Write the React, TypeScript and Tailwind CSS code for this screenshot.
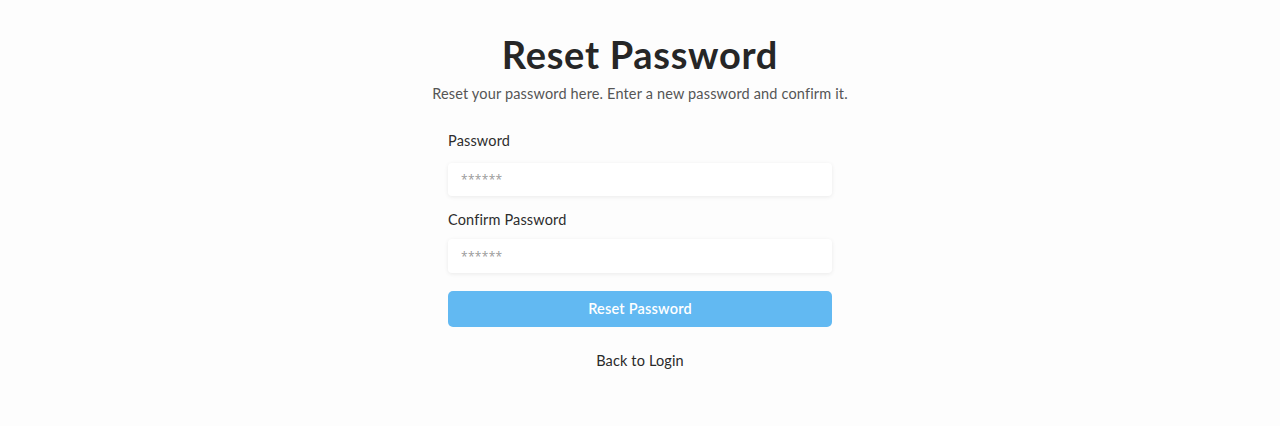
export default function App() {
  return (
    <div className="min-h-[426px] w-full bg-[#fdfdfd] font-['Lato','Noto_Sans',sans-serif] text-[#2a2a2a]">
      <div className="flex flex-col items-center pt-[32px]">
        <h1 className="text-[38px] font-bold leading-[44px] tracking-[0.7px] text-[#262626]">Reset Password</h1>
        <p className="mt-[8px] text-[14.5px] leading-[20px] tracking-[0.16px] text-[#555]">
          Reset your password here. Enter a new password and confirm it.
        </p>
        <form className="mt-[27px] flex w-[384px] flex-col" onSubmit={(e) => e.preventDefault()}>
          <label className="text-[14.5px] leading-[20px] tracking-[0.15px] text-[#2d2d2d]">Password</label>
          <input
            type="password"
            placeholder="******"
            className="mt-[12px] h-[33px] w-full rounded-[4px] bg-white px-[13px] font-['Open_Sans',sans-serif] text-[12px] tracking-[0.3px] shadow-[0_1px_4px_rgba(0,0,0,0.08)] outline-none placeholder:text-[#999]"
          />
          <label className="mt-[14px] text-[14.5px] leading-[20px] tracking-[0.15px] text-[#2d2d2d]">Confirm Password</label>
          <input
            type="password"
            placeholder="******"
            className="mt-[9px] h-[34px] w-full rounded-[4px] bg-white px-[13px] font-['Open_Sans',sans-serif] text-[12px] tracking-[0.3px] shadow-[0_1px_4px_rgba(0,0,0,0.08)] outline-none placeholder:text-[#999]"
          />
          <button
            type="submit"
            className="mt-[18px] h-[36px] w-full rounded-[5px] bg-[#62b9f2] text-[14.5px] font-semibold tracking-[0.2px] text-white"
          >
            Reset Password
          </button>
          <a href="#" className="mt-[24px] self-center text-[14.5px] leading-[20px] tracking-[0.15px] text-[#2a2a2a]">
            Back to Login
          </a>
        </form>
      </div>
    </div>
  );
}
